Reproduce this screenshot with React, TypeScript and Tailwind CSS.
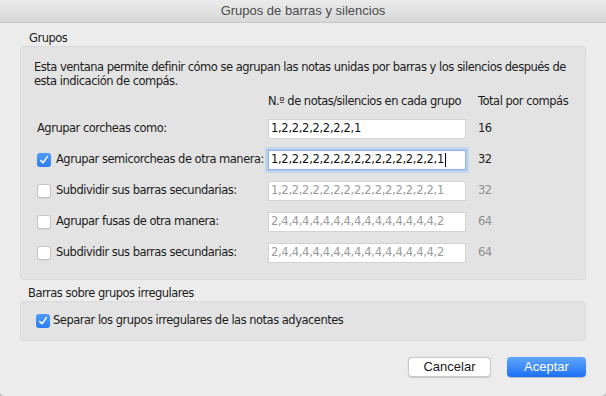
import React from "react";

const rows = [
  { label: "Agrupar corcheas como:", value: "1,2,2,2,2,2,2,2,1", total: "16", check: null, enabled: true },
  { label: "Agrupar semicorcheas de otra manera:", value: "1,2,2,2,2,2,2,2,2,2,2,2,2,2,2,2,1", total: "32", check: true, enabled: true, focus: true },
  { label: "Subdividir sus barras secundarias:", value: "1,2,2,2,2,2,2,2,2,2,2,2,2,2,2,2,1", total: "32", check: false, enabled: false },
  { label: "Agrupar fusas de otra manera:", value: "2,4,4,4,4,4,4,4,4,4,4,4,4,4,4,4,2", total: "64", check: false, enabled: false },
  { label: "Subdividir sus barras secundarias:", value: "2,4,4,4,4,4,4,4,4,4,4,4,4,4,4,4,2", total: "64", check: false, enabled: false },
];

const Checkbox = ({ checked }: { checked: boolean }) =>
  checked ? (
    <span className="flex h-[14px] w-[14px] shrink-0 items-center justify-center rounded-[3px] bg-gradient-to-b from-[#4f9bfb] to-[#2c7df6]">
      <svg width="10" height="10" viewBox="0 0 10 10">
        <path d="M1.8 5.4 L4 7.8 L8.4 1.6" fill="none" stroke="white" strokeWidth="1.5" strokeLinecap="round" strokeLinejoin="round" />
      </svg>
    </span>
  ) : (
    <span className="h-[14px] w-[14px] shrink-0 rounded-[3px] border border-[#c4c4c4] bg-white shadow-[0_0.5px_0.5px_rgba(0,0,0,0.1)]" />
  );

export default function App() {
  return (
    <div className="h-[396px] w-[606px] bg-[#c4c4c4]">
      <div
        className="flex h-[396px] w-[606px] flex-col overflow-hidden rounded-b-[5px] bg-[#ececec] text-[#1c1c1c]"
        style={{ fontFamily: '"DejaVu Sans", sans-serif' }}
      >
        {/* title bar */}
        <div
          className="flex h-[23px] shrink-0 items-center justify-center border-b border-[#c8c8c8] bg-gradient-to-b from-[#ebebeb] to-[#d8d8d8] text-[13px] text-[#4a4a4a]"
          style={{ fontFamily: '"Liberation Sans", Arial, sans-serif' }}
        >
          Grupos de barras y silencios
        </div>

        <div className="flex flex-col px-[20px] text-[11.5px] tracking-[-0.5px]">
          <div className="pl-[9px] pt-[7px] leading-[16px]">Grupos</div>
          <div className="h-[234px] rounded-[4px] border border-[#dadada] bg-[#e3e3e3] pl-[13px] pr-[8px] pt-[13px]">
            <p className="leading-[14px]">
              Esta ventana permite definir cómo se agrupan las notas unidas por barras y los silencios después de esta indicación de compás.
            </p>
            <div className="mt-[6px] grid grid-cols-[234px_198px_1fr] items-center gap-y-[11px] whitespace-nowrap">
              <div />
              <div className="leading-[14px]">N.º de notas/silencios en cada grupo</div>
              <div className="pl-[12px] leading-[14px]">Total por compás</div>
              {rows.map((r, i) => (
                <React.Fragment key={i}>
                  <div className="flex items-center gap-[5px] pl-[3px]">
                    {r.check !== null && <Checkbox checked={r.check} />}
                    <span>{r.label}</span>
                  </div>
                  <div
                    className={`flex h-[20px] items-center border bg-white pl-[2px] tracking-[-0.3px] ${
                      r.focus
                        ? "border-[#8fb3e8] shadow-[0_0_0_2.5px_#b9cff0]"
                        : "border-[#d2d2d2]"
                    } ${r.enabled ? "text-[#111]" : "text-[#9b9b9b]"}`}
                  >
                    {r.value}
                    {r.focus && <span className="ml-[1px] h-[14px] w-[1px] bg-black" />}
                  </div>
                  <div className={`pl-[12px] ${r.enabled ? "text-[#222]" : "text-[#8e8e8e]"}`}>{r.total}</div>
                </React.Fragment>
              ))}
            </div>
          </div>

          <div className="pl-[8px] pt-[5px] leading-[16px]">Barras sobre grupos irregulares</div>
          <div className="flex h-[40px] items-center gap-[3px] rounded-[4px] border border-[#dadada] bg-[#e3e3e3] pl-[15px]">
            <Checkbox checked={true} />
            <span>Separar los grupos irregulares de las notas adyacentes</span>
          </div>

          <div className="mt-[16px] flex justify-end gap-[16px] tracking-normal">
            <button className="flex h-[20px] w-[83px] items-center justify-center rounded-[4px] border border-[#c9c9c9] bg-white text-[13px] text-[#1a1a1a] shadow-[0_0.5px_1px_rgba(0,0,0,0.15)]"
              style={{ fontFamily: '"Liberation Sans", Arial, sans-serif' }}>
              Cancelar
            </button>
            <button className="flex h-[20px] w-[79px] items-center justify-center rounded-[4px] bg-gradient-to-b from-[#60a6fb] to-[#1b6ff6] text-[13px] text-white shadow-[0_0.5px_1px_rgba(0,0,0,0.2)]"
              style={{ fontFamily: '"Liberation Sans", Arial, sans-serif' }}>
              Aceptar
            </button>
          </div>
        </div>
      </div>
    </div>
  );
}
